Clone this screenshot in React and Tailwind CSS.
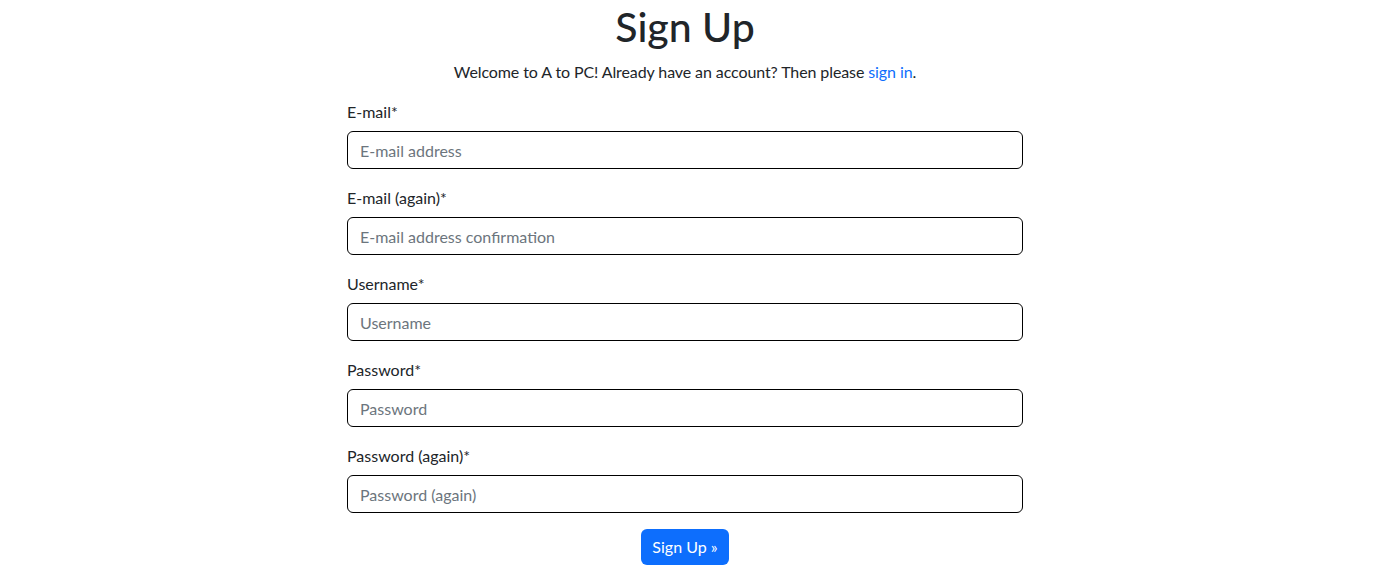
import React from 'react';

const fields = [
  { id: 'email', label: 'E-mail', type: 'email', placeholder: 'E-mail address' },
  { id: 'email2', label: 'E-mail (again)', type: 'email', placeholder: 'E-mail address confirmation' },
  { id: 'username', label: 'Username', type: 'text', placeholder: 'Username' },
  { id: 'password1', label: 'Password', type: 'password', placeholder: 'Password' },
  { id: 'password2', label: 'Password (again)', type: 'password', placeholder: 'Password (again)' },
];

const App = () => {
  return (
    <div className="min-h-screen w-full pr-[10px] bg-white text-[#212529] font-['Lato','Liberation_Sans',sans-serif]">
      <div className="mx-auto w-[676px] pt-[3px]">
        {/* Header */}
        <h1 className="text-center text-[41px] leading-[48px] font-medium mb-[9px]">Sign Up</h1>
        <p className="text-center text-base leading-6 tracking-[-0.1px] mb-[15px]">
          Welcome to A to PC! Already have an account? Then please{' '}
          <a href="#" className="text-[#0d6efd]">sign in</a>.
        </p>

        {/* Form */}
        <form onSubmit={(e) => e.preventDefault()}>
          {fields.map((f) => (
            <div key={f.id} className="mb-4">
              <label htmlFor={f.id} className="block text-base leading-6 pt-px mb-[7px]">
                {f.label}*
              </label>
              <input
                id={f.id}
                name={f.id}
                type={f.type}
                placeholder={f.placeholder}
                className="block w-full h-[38px] px-3 text-base border border-black rounded-md placeholder-[#6c757d] focus:outline-none"
              />
            </div>
          ))}

          <div className="flex justify-center">
            <button
              type="submit"
              className="px-[11px] py-1.5 text-base leading-6 text-white bg-[#0d6efd] rounded-md"
            >
              Sign Up »
            </button>
          </div>
        </form>
      </div>
    </div>
  );
};

export default App;
